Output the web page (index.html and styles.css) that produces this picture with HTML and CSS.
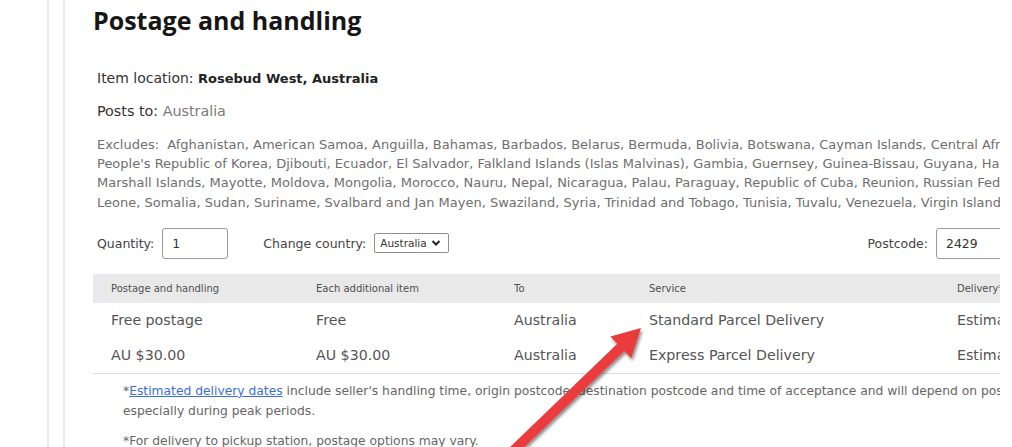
FILE: index.html
```html
<!DOCTYPE html>
<html lang="en">
<head>
<meta charset="utf-8">
<title>Postage and handling</title>
<link rel="stylesheet" href="styles.css">
</head>
<body>
<div class="page">
  <div class="frame">
    <div class="panel">
      <h1 class="title">Postage and handling</h1>
      <div class="info">
        <p class="loc">Item location: <b>Rosebud West, Australia</b></p>
        <p class="posts">Posts to: <span class="muted">Australia</span></p>
        <div class="excludes">
          <div class="xl">Excludes:&nbsp; Afghanistan, American Samoa, Anguilla, Bahamas, Barbados, Belarus, Bermuda, Bolivia, Botswana, Cayman Islands, Central African Republic, Chad, Cook Islands, Democratic</div>
          <div class="xl">People's Republic of Korea, Djibouti, Ecuador, El Salvador, Falkland Islands (Islas Malvinas), Gambia, Guernsey, Guinea-Bissau, Guyana, Haiti, Iran, Iraq, Jersey, Laos, Liberia, Libya, Mali,</div>
          <div class="xl">Marshall Islands, Mayotte, Moldova, Mongolia, Morocco, Nauru, Nepal, Nicaragua, Palau, Paraguay, Republic of Cuba, Reunion, Russian Federation, Saint Pierre and Miquelon, Sierra</div>
          <div class="xl">Leone, Somalia, Sudan, Suriname, Svalbard and Jan Mayen, Swaziland, Syria, Trinidad and Tobago, Tunisia, Tuvalu, Venezuela, Virgin Islands (U.S.), Western Sahara, Yemen</div>
        </div>
        <div class="controls">
          <label class="ctl">Quantity: <span class="field qty">1</span></label>
          <label class="ctl country">Change country: <span class="select">Australia <svg class="chev" viewBox="0 0 10 8" width="10" height="8"><path d="M1.5 2 L5 5.5 L8.5 2" fill="none" stroke="#222" stroke-width="2"/></svg></span></label>
          <label class="ctl postcode">Postcode: <span class="field pc">2429</span></label>
        </div>
      </div>
      <table class="rates">
        <colgroup>
          <col class="c1"><col class="c2"><col class="c3"><col class="c4"><col class="c5">
        </colgroup>
        <thead>
          <tr><th>Postage and handling</th><th>Each additional item</th><th>To</th><th>Service</th><th>Delivery*</th></tr>
        </thead>
        <tbody>
          <tr><td>Free postage</td><td>Free</td><td>Australia</td><td>Standard Parcel Delivery</td><td>Estimated between</td></tr>
          <tr><td>AU $30.00</td><td>AU $30.00</td><td>Australia</td><td>Express Parcel Delivery</td><td>Estimated between</td></tr>
        </tbody>
      </table>
      <div class="notes">
        <p class="note">*<a class="link" href="#">Estimated delivery dates</a> include seller's handling time, origin postcode, destination postcode and time of acceptance and will depend on postage service selected and receipt of cleared payment. Delivery times may vary,<br>especially during peak periods.</p>
        <p class="note">*For delivery to pickup station, postage options may vary.</p>
      </div>
    </div>
  </div>
</div>
<svg class="arrow" width="1012" height="447" viewBox="0 0 1012 447">
  <defs>
    <filter id="sh" x="-20%" y="-20%" width="140%" height="140%">
      <feDropShadow dx="1.5" dy="2.5" stdDeviation="1.8" flood-color="#000" flood-opacity="0.45"/>
    </filter>
  </defs>
  <polygon filter="url(#sh)" fill="#ea3a3c" points="508.5,448.4 617.3,343.8 610.4,336.6 641,328 631.2,358.2 624.3,351 515.5,455.6"/>
</svg>
</body>
</html>
```

FILE: styles.css
```css
html, body {
  margin: 0;
  padding: 0;
  background: #fff;
}
body {
  font-family: "DejaVu Sans", "Open Sans", "Liberation Sans", sans-serif;
  color: #333;
  overflow: hidden;
  height: 447px;
}
.page {
  padding-left: 47px;
  height: 447px;
}
.frame {
  border-left: 2px solid #ececec;
  padding-left: 14px;
  height: 447px;
}
.panel {
  border-left: 2px solid #ececec;
  padding-left: 28px;
  padding-top: 4px;
  width: 907px;
  height: 443px;
  overflow: hidden;
}
.title {
  margin: 0;
  font-family: "Open Sans", "Liberation Sans", sans-serif;
  font-size: 25px;
  line-height: 32px;
  font-weight: 700;
  color: #161616;
  white-space: nowrap;
}
.info {
  padding-left: 4px;
  width: 996px;
}
.loc {
  margin: 32px 0 0;
  font-size: 14px;
  line-height: 20px;
  color: #333;
  white-space: nowrap;
}
.loc b {
  font-size: 13px;
  font-weight: 700;
  color: #222;
}
.posts {
  margin: 12px 0 0;
  font-size: 14.3px;
  line-height: 20px;
  color: #333;
}
.muted {
  color: #7a7a7a;
}
.excludes {
  margin-top: 14px;
  font-size: 13px;
  line-height: 19.2px;
  color: #6f6f6f;
}
.xl {
  white-space: nowrap;
}
.controls {
  margin-top: 16px;
  display: flex;
  align-items: center;
  height: 31px;
  font-size: 12.5px;
  color: #444;
}
.ctl {
  display: flex;
  align-items: center;
  gap: 8px;
  white-space: nowrap;
}
.field {
  box-sizing: border-box;
  height: 31px;
  border: 1px solid #9a9a9a;
  border-radius: 3px;
  display: flex;
  align-items: center;
  padding-left: 9px;
  font-size: 12.4px;
  color: #333;
}
.qty {
  width: 66px;
}
.country {
  margin-left: 35px;
}
.select {
  box-sizing: border-box;
  height: 20px;
  width: 75px;
  border: 1px solid #8f8f8f;
  border-radius: 2px;
  display: flex;
  align-items: center;
  gap: 4px;
  padding: 0 4px 0 5px;
  font-size: 10.5px;
  color: #333;
}
.chev {
  display: block;
}
.postcode {
  margin-left: auto;
}
.pc {
  width: 157px;
}
.rates {
  margin-top: 15px;
  width: 1000px;
  table-layout: fixed;
  border-collapse: collapse;
}
.c1 { width: 205px; }
.c2 { width: 198px; }
.c3 { width: 135px; }
.c4 { width: 308px; }
.rates th {
  background: #e9e9e9;
  height: 29px;
  padding: 0 0 0 18px;
  text-align: left;
  font-size: 10px;
  font-weight: 400;
  color: #4f4f4f;
  white-space: nowrap;
  overflow: hidden;
}
.rates td {
  height: 35px;
  padding: 0 0 0 18px;
  font-size: 14.2px;
  color: #555;
  white-space: nowrap;
  overflow: hidden;
}
.rates tbody tr:last-child td {
  border-bottom: 1px solid #dcdcdc;
}
.notes {
  padding: 7px 0 0 30px;
  width: 1000px;
  font-size: 12.3px;
  line-height: 20px;
  color: #666;
}
.note {
  margin: 0 0 10px;
  white-space: nowrap;
}
.link {
  color: #3b6fd4;
  text-decoration: underline;
}
.arrow {
  position: absolute;
  left: 0;
  top: 0;
  pointer-events: none;
}
```
